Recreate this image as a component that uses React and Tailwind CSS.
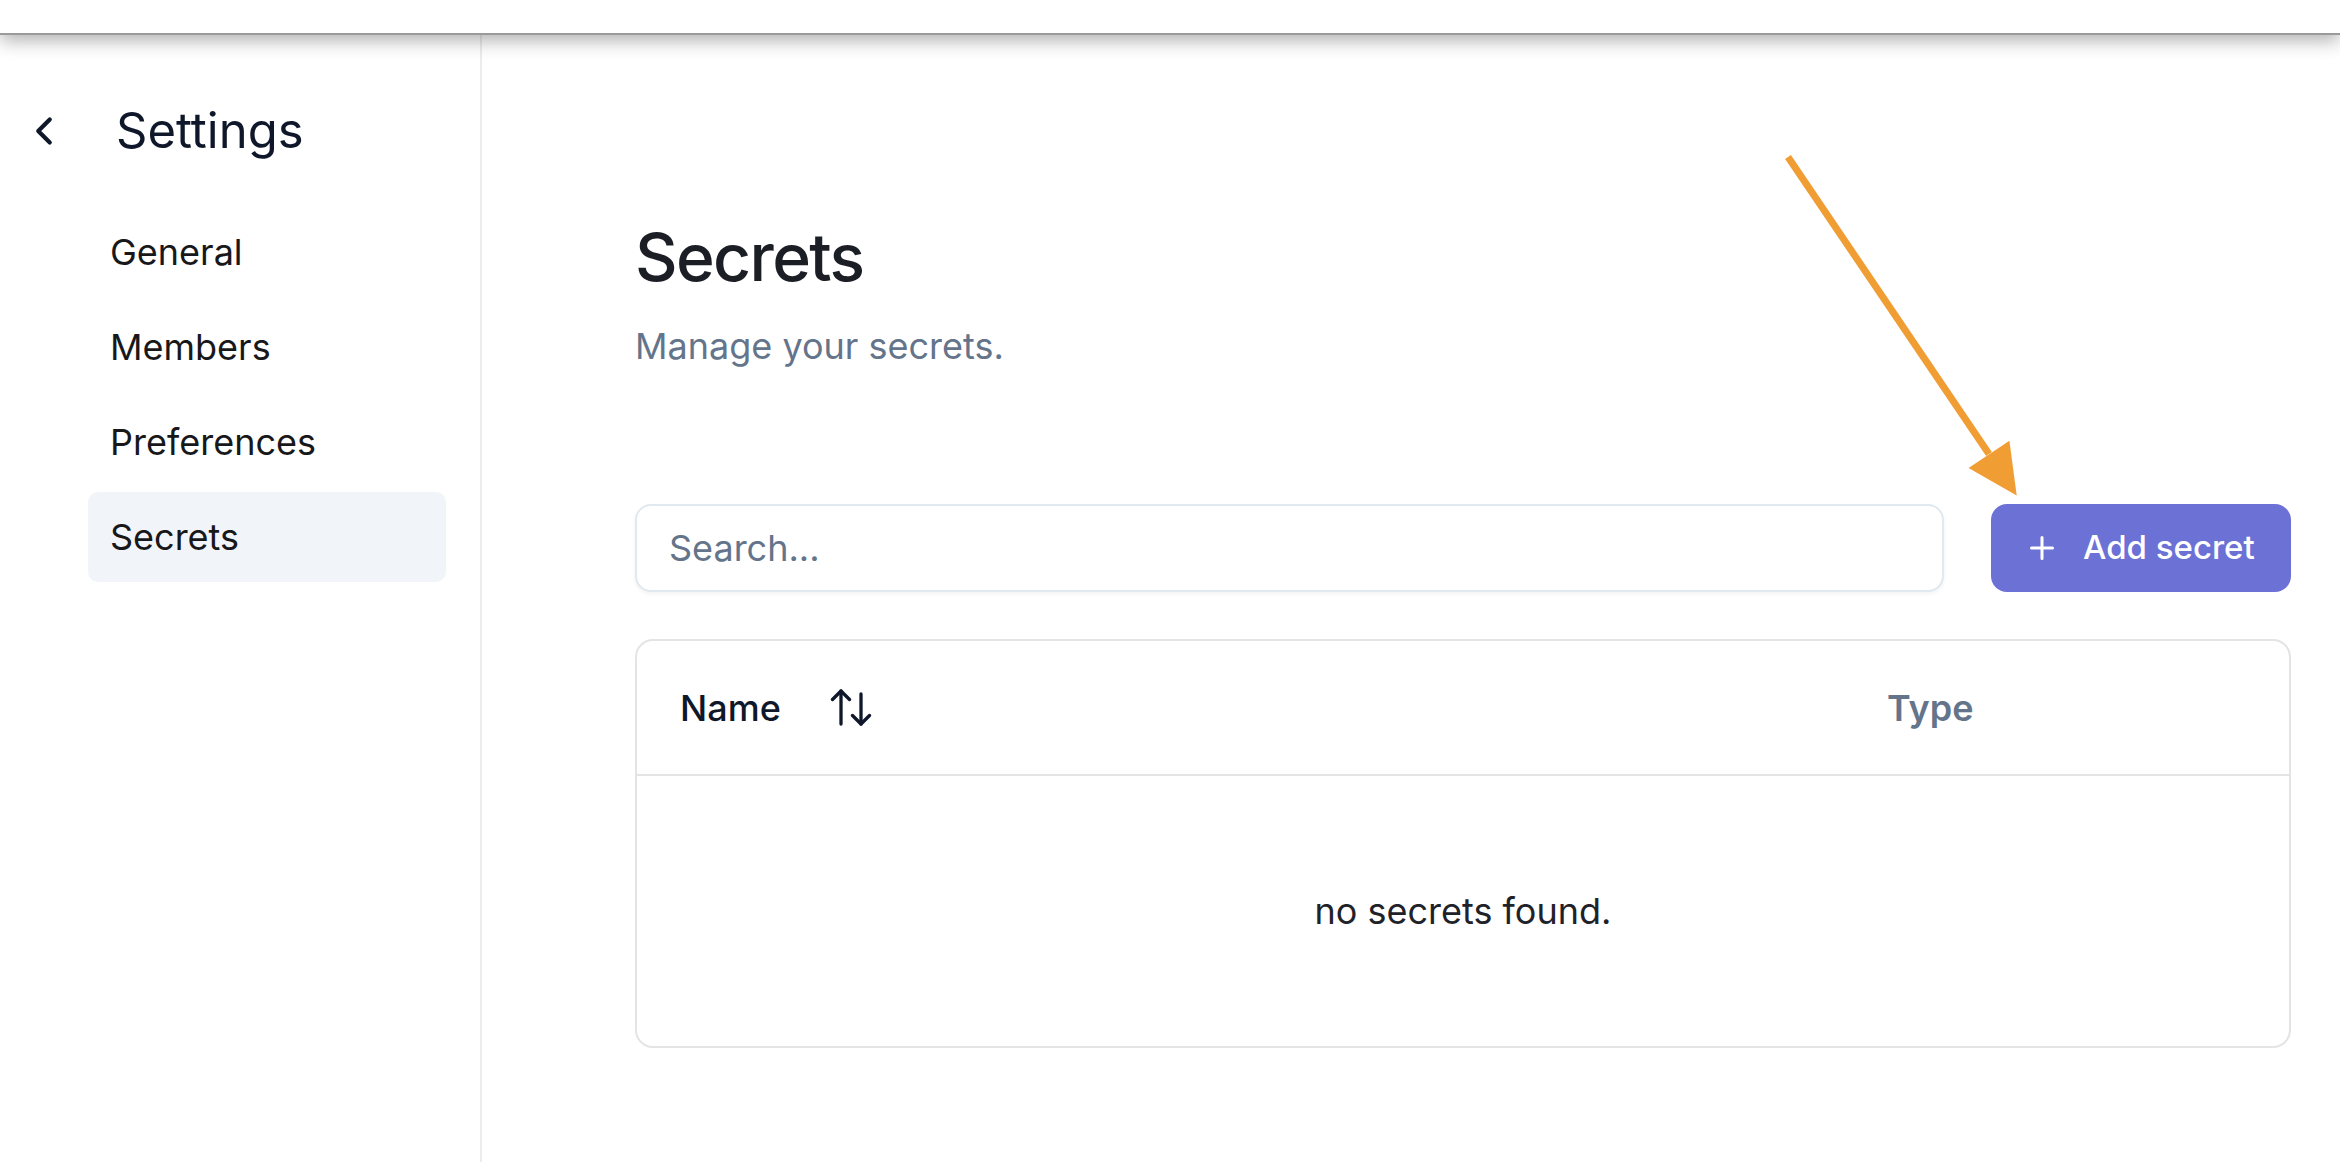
import { ChevronLeft, Plus } from "lucide-react";

const navItems = ["General", "Members", "Preferences", "Secrets"];
const active = "Secrets";

function SortIcon() {
  return (
    <svg width="42" height="37" viewBox="0 0 42 37" fill="none" stroke="#0f172a" strokeWidth="3.3" strokeLinecap="round" strokeLinejoin="round">
      <path d="M11 2v33" />
      <path d="M2.5 10.5 11 2l8.5 8.5" />
      <path d="M31 5v30" />
      <path d="M22.5 26.5 31 35l8.5-8.5" />
    </svg>
  );
}

export default function App() {
  return (
    <div className="relative min-h-screen overflow-hidden bg-white font-[Inter,sans-serif]">
      <div className="relative z-10 h-[35px] border-b-2 border-[#9a9a9a] bg-white shadow-[0_6px_18px_rgba(0,0,0,0.3)]" />
      <div className="flex h-[1127px]">
        <aside className="w-[482px] shrink-0 border-r-2 border-[#ececec]">
          <div className="mt-[64px] flex h-[64px] items-center pl-[21px]">
            <ChevronLeft size={46} strokeWidth={2.2} className="text-[#0f172a]" />
            <span className="ml-[49px] text-[49px] leading-[64px] text-[#0f172a]">Settings</span>
          </div>
          <nav className="ml-[88px] mt-[44px] flex w-[358px] flex-col gap-[5px]">
            {navItems.map((item) => (
              <div
                key={item}
                className={
                  item === active
                    ? "flex h-[90px] items-center rounded-[10px] bg-[#f1f5f9] pl-[22px] text-[36px] text-[#18181b]"
                    : "flex h-[90px] items-center rounded-[10px] pl-[22px] text-[36px] text-[#18181b]"
                }
              >
                {item}
              </div>
            ))}
          </nav>
        </aside>

        <main className="flex-1 pl-[153px]">
          <div className="w-[1656px]">
            <h1 className="pt-[189px] text-[66px] font-medium leading-[66px] tracking-tight text-[#1b1e24]">Secrets</h1>
            <p className="mt-[34px] text-[36px] leading-[44px] text-[#64748b]">Manage your secrets.</p>

            <div className="mt-[136px] flex gap-[47px]">
              <input
                type="text"
                placeholder="Search..."
                className="h-[88px] flex-1 rounded-[16px] border-2 border-[#e2e8f0] bg-white px-[32px] text-[36px] text-[#0f172a] shadow-[0_2px_4px_rgba(15,23,42,0.05)] outline-none placeholder:text-[#64748b]"
              />
              <button className="flex h-[88px] w-[300px] items-center gap-[23px] rounded-[16px] bg-[#6c71d6] pl-[33px] text-[33px] font-medium text-white">
                <Plus size={36} strokeWidth={2} />
                <span>Add secret</span>
              </button>
            </div>

            <div className="mt-[47px] overflow-hidden rounded-[18px] border-2 border-[#e4e4e7]">
              <div className="grid h-[135px] grid-cols-[1208px_1fr] items-center border-b-2 border-[#e4e4e7]">
                <div className="flex items-center gap-[49px] pl-[43px]">
                  <span className="text-[36px] font-medium text-[#0f172a]">Name</span>
                  <SortIcon />
                </div>
                <div className="pl-[42px] text-[36px] font-semibold text-[#64748b]">Type</div>
              </div>
              <div className="flex h-[270px] items-center justify-center text-[36px] text-[#1f2229]">
                no secrets found.
              </div>
            </div>
          </div>
        </main>
      </div>

      <svg className="pointer-events-none absolute left-0 top-0" width="2340" height="1162" viewBox="0 0 2340 1162">
        <line x1="1788" y1="157" x2="1989" y2="454" stroke="#f09d33" strokeWidth="7" />
        <polygon points="1968.6,468 2009.4,440.7 2016.7,495.4" fill="#f09d33" />
      </svg>
    </div>
  );
}
